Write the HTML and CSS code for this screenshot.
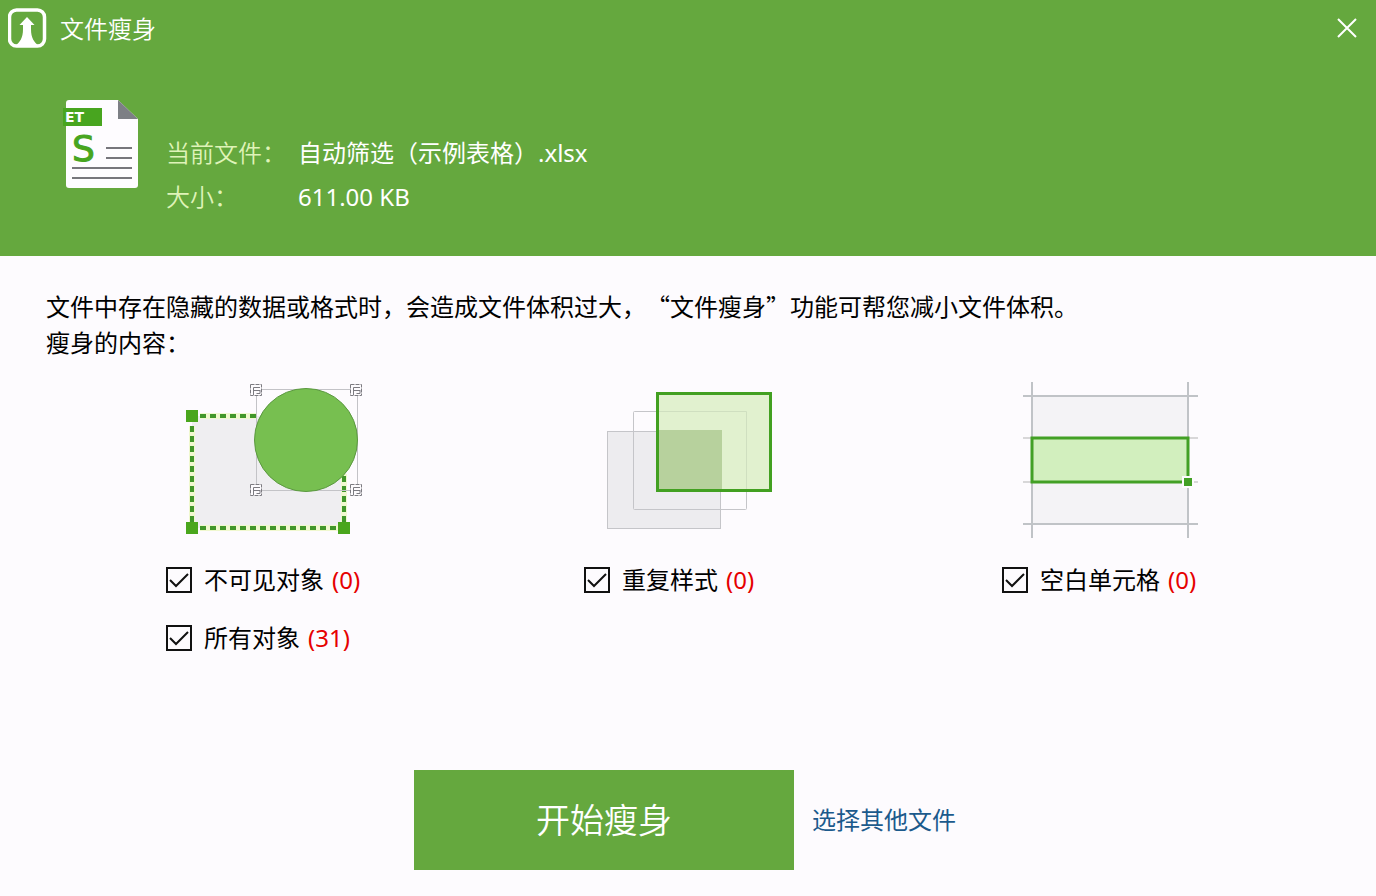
FILE: index.html
```
<!DOCTYPE html>
<html lang="zh-CN">
<head>
  <meta charset="UTF-8">
  <meta name="viewport" content="width=device-width, initial-scale=1.0">
  <title>文件瘦身</title>
  <link rel="stylesheet" href="styles.css">
</head>
<body>
  <header class="header">
    <div class="title-bar">
      <svg class="logo" width="40" height="40" viewBox="0 0 40 40">
        <rect x="1.500" y="2" width="35" height="36" rx="7" fill="none" stroke="#fff" stroke-width="3.500"/>
        <path d="M19 9 L26.500 17 H23 V21 C23 30 26 34 31 38 H7 C12 34 15 30 15 21 V17 H11.500 Z" fill="#fff"/>
      </svg>
      <h1 class="title">文件瘦身</h1>
      <button class="close" type="button" aria-label="关闭">
        <svg width="20" height="20" viewBox="0 0 20 20">
          <path d="M1 1 L19 19 M19 1 L1 19" stroke="#fff" stroke-width="2" fill="none"/>
        </svg>
      </button>
    </div>

    <div class="file">
      <svg class="file-icon" width="80" height="92" viewBox="0 0 80 92">
        <path d="M7 2 H56 L76 21 V87 Q76 90 73 90 H7 Q4 90 4 87 V5 Q4 2 7 2 Z" fill="#fefcff"/>
        <path d="M56 2 L76 21 H56 Z" fill="#7d7f85"/>
        <rect x="1" y="10" width="39" height="18" fill="#48a51f"/>
        <text class="icon-type" x="3" y="24">ET</text>
        <text class="icon-letter" x="10" y="63">S</text>
        <path d="M44 50 H70 M44 60 H70 M10 70 H70 M10 80 H70" stroke="#77767c" stroke-width="2"/>
      </svg>
      <dl class="file-info">
        <dt>当前文件：</dt>
        <dd>自动筛选（示例表格）.xlsx</dd>
        <dt>大小：</dt>
        <dd>611.00 KB</dd>
      </dl>
    </div>
  </header>

  <main class="content">
    <p class="intro">文件中存在隐藏的数据或格式时，会造成文件体积过大，“文件瘦身”功能可帮您减小文件体积。<br>瘦身的内容：</p>

    <div class="options">
      <div class="option">
        <svg width="196" height="160" viewBox="0 0 196 160">
          <rect x="26" y="36" width="152" height="112" fill="#efeef1"/>
          <path d="M34 36 H90 M26 46 V142 M34 148 H172 M178 142 V94" fill="none" stroke="#f0f8cf" stroke-width="6"/>
          <path d="M34 36 H90 M26 46 V142 M34 148 H172 M178 142 V94" fill="none" stroke="#41962a" stroke-width="4" stroke-dasharray="6 4"/>
          <path d="M20 30 H32 V42 H20 Z M20 142 H32 V154 H20 Z M172 142 H184 V154 H172 Z" fill="#4aa61d"/>
          <rect x="90.500" y="9.500" width="101" height="101" fill="none" stroke="#c3c3c7"/>
          <circle cx="140" cy="60" r="51.500" fill="#77bf50" stroke="#5b9940"/>
          <g fill="#fdfbfe" stroke="#7c7b81">
            <path d="M84.500 4.500 H95.500 V15.500 H84.500 Z M184.500 4.500 H195.500 V15.500 H184.500 Z M84.500 104.500 H95.500 V115.500 H84.500 Z M184.500 104.500 H195.500 V115.500 H184.500 Z" stroke-dasharray="4 1"/>
            <path d="M87.500 15 V7.500 H94 M88 10.500 H94 M90.500 13.500 H94 V10 M187.500 15 V7.500 H194 M188 10.500 H194 M190.500 13.500 H194 V10 M87.500 115 V107.500 H94 M88 110.500 H94 M90.500 113.500 H94 V110 M187.500 115 V107.500 H194 M188 110.500 H194 M190.500 113.500 H194 V110" fill="none"/>
          </g>
        </svg>
        <label class="check"><input type="checkbox" checked><span>不可见对象</span><span class="count">(0)</span></label>
        <label class="check"><input type="checkbox" checked><span>所有对象</span><span class="count">(31)</span></label>
      </div>

      <div class="option">
        <svg width="196" height="160" viewBox="0 0 196 160">
          <rect x="23.500" y="51.500" width="113" height="97" fill="#edecef" stroke="#c5c5c9"/>
          <rect x="49.500" y="31.500" width="113" height="98" rx="1" fill="none" stroke="#c5c5c9"/>
          <rect x="73" y="13" width="114" height="98" fill="#e1f1cf"/>
          <path d="M73 31.500 H162.500 V110" fill="none" stroke="#cfdfc0"/>
          <rect x="73" y="50" width="65" height="61" fill="#b7d19d"/>
          <rect x="73.500" y="13.500" width="113" height="97" fill="none" stroke="#42a021" stroke-width="3"/>
        </svg>
        <label class="check"><input type="checkbox" checked><span>重复样式</span><span class="count">(0)</span></label>
      </div>

      <div class="option">
        <svg width="196" height="160" viewBox="0 0 196 160">
          <rect x="30" y="16" width="156" height="128" fill="#f4f3f6"/>
          <path d="M21 16 H196 M21 144 H196 M30 2 V158 M186 2 V158" stroke="#c0c3c7" stroke-width="2"/>
          <path d="M21 58 H196 M21 102 H196" stroke="#b3b3b3"/>
          <rect x="30" y="58" width="156" height="44" fill="#d2efbe" stroke="#42a025" stroke-width="3"/>
          <rect x="181" y="97" width="10" height="10" fill="#42a025" stroke="#fdfbfe" stroke-width="2"/>
        </svg>
        <label class="check"><input type="checkbox" checked><span>空白单元格</span><span class="count">(0)</span></label>
      </div>
    </div>
  </main>

  <footer class="actions">
    <button class="start" type="button">开始瘦身</button>
    <a class="other" href="#">选择其他文件</a>
  </footer>
</body>
</html>
```
FILE: styles.css
```
* {
  box-sizing: border-box;
}

body {
  margin: 0;
  min-height: 100vh;
  display: flex;
  flex-direction: column;
  font-family: "Noto Sans", "Noto Sans CJK SC", sans-serif;
  font-size: 24px;
  line-height: 36px;
  color: #000;
  background: #fdfbfe;
  text-spacing-trim: space-all;
}

svg {
  display: block;
}

.header {
  padding-bottom: 37px;
  background: #65a83e;
  color: #fff;
}

.title-bar {
  display: flex;
  align-items: center;
  gap: 12px;
  height: 56px;
  padding: 0 17px 0 8px;
}

.title {
  margin: 0;
  padding-top: 2px;
  font-size: 24px;
  font-weight: 350;
}

.close {
  margin-left: auto;
  padding: 2px;
  border: none;
  background: none;
  cursor: pointer;
}

.file {
  display: flex;
  align-items: flex-start;
  gap: 24px;
  padding: 42px 62px 0;
}

.file-info {
  display: grid;
  grid-template-columns: auto 1fr;
  column-gap: 12px;
  margin: 0;
  padding-top: 33px;
  font-weight: 350;
  line-height: 44px;
}

.file-info dt {
  color: #dff3b8;
}

.file-info dd {
  margin: 0;
  font-weight: 400;
}

.icon-type {
  font: bold 14px "DejaVu Sans", sans-serif;
  fill: #fff;
}

.icon-letter {
  font: 36px "DejaVu Sans", sans-serif;
  fill: #48a51f;
  stroke: #48a51f;
}

.content {
  padding-top: 32px;
}

.intro {
  margin: 0;
  padding: 0 46px;
  font-family: "Noto Sans CJK SC", sans-serif;
}

.options {
  display: grid;
  grid-template-columns: repeat(3, 196px);
  justify-content: space-between;
  padding: 20px 178px 0 166px;
}

.option {
  display: flex;
  flex-direction: column;
  gap: 22px;
}

.check {
  display: flex;
  align-items: center;
  white-space: nowrap;
  cursor: pointer;
}

.check input {
  appearance: none;
  flex: none;
  width: 26px;
  height: 26px;
  margin: 0 12px 0 0;
  border: 2px solid #111;
  background: transparent;
}

.check input:checked {
  background: url("data:image/svg+xml,%3Csvg xmlns='http://www.w3.org/2000/svg' viewBox='0 0 22 22'%3E%3Cpath d='M2 11 L8 17 L20 5' fill='none' stroke='%23111' stroke-width='2'/%3E%3C/svg%3E") center / 22px 22px no-repeat;
}

.count {
  margin-left: 8px;
  color: #e60000;
}

.actions {
  display: flex;
  align-items: center;
  justify-content: center;
  gap: 18px;
  margin-top: auto;
  padding: 26px 6px 26px 0;
}

.start {
  width: 380px;
  height: 100px;
  padding: 0 0 4px;
  border: none;
  background: #65a83e;
  color: #fff;
  font-family: inherit;
  font-size: 34px;
  font-weight: 350;
  cursor: pointer;
}

.other {
  color: #1c5a8c;
  text-decoration: none;
}
```
